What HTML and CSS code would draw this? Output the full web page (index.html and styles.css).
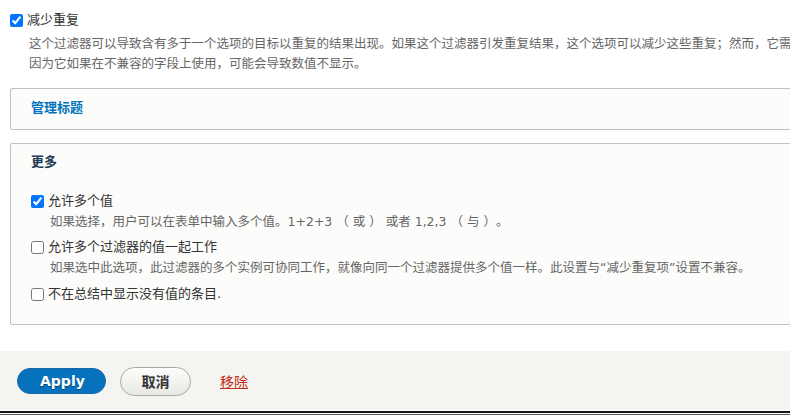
FILE: index.html
```html
<!DOCTYPE html>
<html lang="zh">
<head>
<meta charset="utf-8">
<link rel="stylesheet" href="styles.css">
</head>
<body>
<div class="main">
  <div class="item top-item">
    <label class="check-row"><input type="checkbox" checked><span class="label">减少重复</span></label>
    <div class="desc">
      <div class="line">这个过滤器可以导致含有多于一个选项的目标以重复的结果出现。如果这个过滤器引发重复结果，这个选项可以减少这些重复；然而，它需要谨慎使用，</div>
      <div class="line">因为它如果在不兼容的字段上使用，可能会导致数值不显示。</div>
    </div>
  </div>

  <div class="fieldset fs-closed">
    <div class="fs-title link">管理标题</div>
  </div>

  <div class="fieldset fs-open">
    <div class="fs-title dark">更多</div>
    <div class="fs-body">
      <div class="item">
        <label class="check-row"><input type="checkbox" checked><span class="label">允许多个值</span></label>
        <div class="desc"><div class="line">如果选择，用户可以在表单中输入多个值。1+2+3 （ 或 ） 或者 1,2,3 （ 与 ）。</div></div>
      </div>
      <div class="item">
        <label class="check-row"><input type="checkbox"><span class="label">允许多个过滤器的值一起工作</span></label>
        <div class="desc"><div class="line">如果选中此选项，此过滤器的多个实例可协同工作，就像向同一个过滤器提供多个值一样。此设置与“减少重复项”设置不兼容。</div></div>
      </div>
      <div class="item">
        <label class="check-row"><input type="checkbox"><span class="label">不在总结中显示没有值的条目.</span></label>
      </div>
    </div>
  </div>
</div>

<div class="actions">
  <button class="btn btn-primary" type="button">Apply</button>
  <button class="btn btn-default" type="button">取消</button>
  <a class="remove" href="#">移除</a>
</div>
<div class="bottom-rule"></div>
</body>
</html>
```

FILE: styles.css
```css
html, body {
  margin: 0;
  padding: 0;
}
body {
  width: 790px;
  height: 415px;
  overflow: hidden;
  background: #ffffff;
  font-family: "DejaVu Sans", "Noto Sans CJK SC", sans-serif;
  color: #333333;
  text-spacing-trim: space-all;
}
.main {
  padding: 11px 0 26px 10px;
  width: 900px;
}
.check-row {
  display: flex;
  align-items: center;
  height: 18px;
}
.check-row input {
  width: 13px;
  height: 13px;
  margin: 0 4px 0 0;
  flex: none;
}
.label {
  font-size: 13px;
  line-height: 18px;
  white-space: nowrap;
  color: #333;
}
.desc {
  margin-left: 19px;
  margin-top: 2px;
  font-size: 12.5px;
  line-height: 20px;
  color: #666666;
}
.top-item .desc {
  margin-top: 5px;
}
.line {
  white-space: nowrap;
}
.fieldset {
  background: #fcfcfa;
  border: 1px solid #c0c0c0;
  border-radius: 2px;
  box-sizing: border-box;
}
.fs-closed {
  margin-top: 14px;
  padding: 10px 20px 12px;
}
.fs-open {
  margin-top: 13px;
  padding: 9px 20px 21px;
}
.fs-title {
  font-size: 13px;
  font-weight: bold;
  line-height: 18px;
}
.fs-title.link {
  color: #0074bd;
}
.fs-title.dark {
  color: #1f3c56;
}
.fs-body {
  display: flex;
  flex-direction: column;
  gap: 6px;
  margin-top: 21px;
}
.fs-body .item:last-child {
  margin-top: 1px;
}
.actions {
  height: 59px;
  background: #f4f4f0;
  display: flex;
  align-items: center;
  padding-left: 17px;
  padding-top: 1px;
  box-sizing: border-box;
}
.btn {
  font-family: "DejaVu Sans", "Noto Sans CJK SC", sans-serif;
  font-size: 14px;
  font-weight: bold;
  border-radius: 20px;
  box-sizing: border-box;
  cursor: pointer;
}
.btn-primary {
  height: 26px;
  padding: 0 22px;
  width: 89px;
  color: #ffffff;
  background: #0672bd;
  border: 1px solid #1a65a8;
  text-shadow: 0 1px 1px rgba(0,0,0,0.4);
}
.btn-default {
  height: 29px;
  width: 71px;
  padding: 0;
  margin-left: 14px;
  color: #333333;
  background: linear-gradient(#fdfdfc, #e7e7e3);
  border: 1px solid #a8a8a4;
}
.remove {
  margin-left: 29px;
  font-size: 14px;
  color: #c42a1b;
  text-decoration: underline;
}
.bottom-rule {
  height: 2px;
  margin-top: 1px;
  background: #141414;
  border-bottom: 1px solid #ffffff;
  box-shadow: 0 2px 0 #555555;
}
```
